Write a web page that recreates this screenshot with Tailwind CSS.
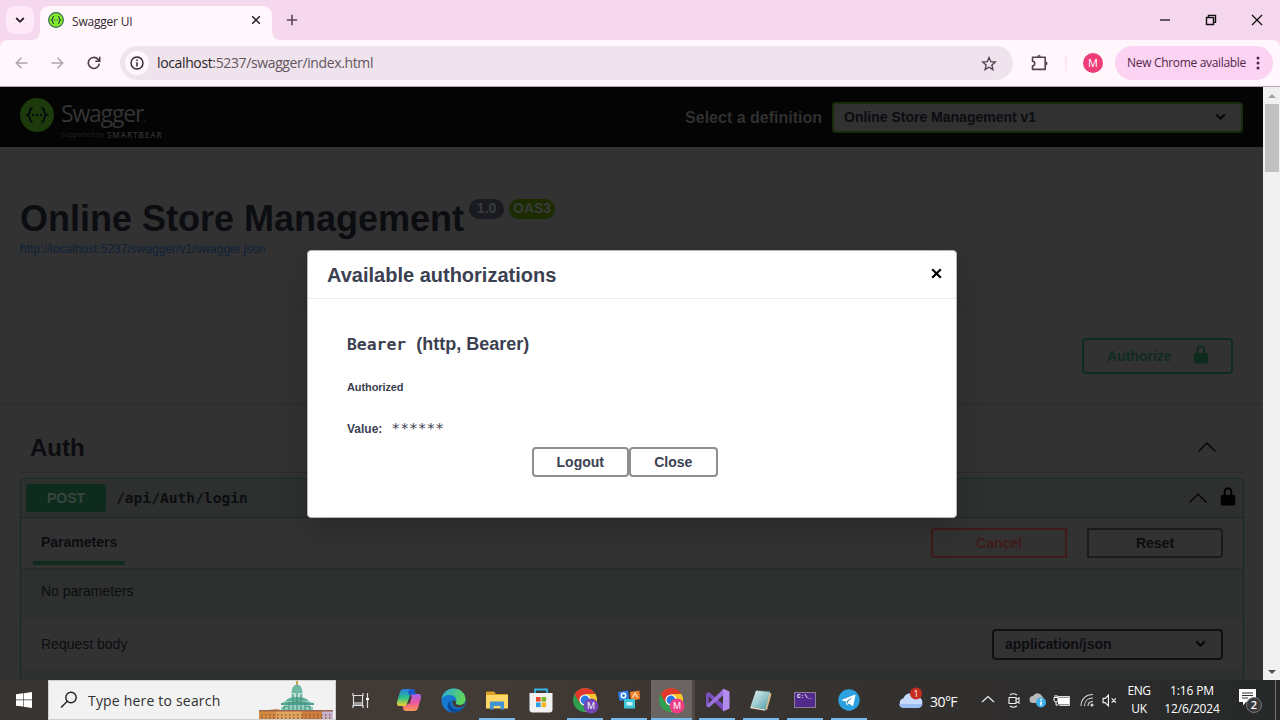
<!DOCTYPE html>
<html lang="en">
<head>
<meta charset="utf-8">
<title>Swagger UI</title>
<script src="https://cdn.jsdelivr.net/npm/@tailwindcss/browser@4"></script>
</head>
<body class="w-[1280px] h-[720px] overflow-hidden flex flex-col font-['Liberation_Sans',sans-serif] bg-[#323232]">

<!-- Tab strip -->
<div class="h-10 shrink-0 bg-[#f6d8ee] flex items-end font-['Open_Sans',sans-serif]">
  <div class="w-10 h-10 relative shrink-0">
    <div class="absolute left-[6px] top-[6px] w-7 h-7 rounded-[9px] bg-[#fdeaf6] flex items-center justify-center">
      <svg width="10" height="8" viewBox="0 0 10 8" fill="none" stroke="#2a1d28" stroke-width="1.8"><path d="M1.2 2l3.8 3.8L8.8 2"/></svg>
    </div>
    <svg class="absolute right-0 bottom-0" width="8" height="8" viewBox="0 0 8 8"><path d="M8 0v8H0a8 8 0 0 0 8-8z" fill="#fff7fb"/></svg>
  </div>
  <div class="w-[232px] h-[34px] rounded-t-[9px] bg-[#fff7fb] flex items-center pl-2 pr-[11px] pb-[6px] shrink-0">
    <svg width="16" height="16" viewBox="0 0 16 16"><circle cx="8" cy="8" r="7.4" fill="#85ea2d" stroke="#2c6b4c" stroke-width="1.1"/><path d="M6 4.5c-2 0-.7 3-2.3 3.5C5.300 8.500 4 11.500 6 11.500M10 4.500c2 0 .7 3 2.300 3.500-1.600.5-.3 3.500-2.300 3.500" fill="none" stroke="#173647" stroke-width="1.100"/><path d="M6 8h4" stroke="#2f6a3c" stroke-width="1" stroke-dasharray="1 .6"/></svg>
    <span class="ml-2 text-[12px] leading-4 text-[#33282f] tracking-[-0.2px] flex-1 pt-[3px]">Swagger UI</span>
    <svg width="10" height="10" viewBox="0 0 10 10" stroke="#241a22" stroke-width="1.5"><path d="M1.200 1.200l7.600 7.600M8.800 1.200l-7.600 7.600"/></svg>
  </div>
  <svg class="shrink-0" width="8" height="8" viewBox="0 0 8 8"><path d="M0 0v8h8a8 8 0 0 1-8-8z" fill="#fff7fb"/></svg>
  <svg class="ml-[6px] mb-[14px] shrink-0" width="12" height="12" viewBox="0 0 12 12" stroke="#5c4457" stroke-width="1.600"><path d="M6 .8v10.400M.8 6h10.400"/></svg>
  <div class="flex-1"></div>
  <div class="flex items-center h-10 pr-[17px] gap-[34px]">
    <svg width="12" height="12" viewBox="0 0 12 12" stroke="#111" stroke-width="1.300"><path d="M1 6h10"/></svg>
    <svg width="12" height="12" viewBox="0 0 12 12" fill="none" stroke="#111" stroke-width="1.400"><path d="M1.500 3.500h7v7h-7zM3.500 3.300V1.400h7v7H8.700"/></svg>
    <svg width="12" height="12" viewBox="0 0 12 12" stroke="#111" stroke-width="1.300"><path d="M1 1l10 10M11 1L1 11"/></svg>
  </div>
</div>

<!-- Toolbar -->
<div class="bg-[#f6d8ee] shrink-0">
<div class="h-[47px] bg-[#fff7fb] rounded-t-[7px] border-b border-[#b8a2b0] flex items-center font-['Open_Sans',sans-serif]">
  <div class="flex items-center gap-[23px] pl-[15px] w-[120px]">
    <svg width="13" height="12" viewBox="0 0 13 12" fill="none" stroke="#aea3aa" stroke-width="1.500"><path d="M12.500 6H1.500M6.500 .8L1.300 6l5.200 5.200"/></svg>
    <svg width="13" height="12" viewBox="0 0 13 12" fill="none" stroke="#aea3aa" stroke-width="1.500"><path d="M.5 6h11M6.500 .8L11.700 6l-5.200 5.200"/></svg>
    <svg width="14" height="14" viewBox="0 0 14 14" fill="none" stroke="#4c3848" stroke-width="1.600"><path d="M12.300 7.600A5.500 5.500 0 1 1 10.900 3.200L12.500 5M12.700 .8v4.400H8.300"/></svg>
  </div>
  <div class="w-[893px] h-[34px] rounded-full bg-[#efe4ed] flex items-center pl-[5px] pr-4">
    <div class="w-6 h-6 rounded-full bg-[#fff7fb] flex items-center justify-center">
      <svg width="14" height="14" viewBox="0 0 14 14"><circle cx="7" cy="7" r="6" fill="none" stroke="#2e2229" stroke-width="1.400"/><path d="M7 6.200v4.200M7 3.500v1.500" stroke="#2e2229" stroke-width="1.500"/></svg>
    </div>
    <span class="ml-2 text-[14px] leading-5 text-[#63545e] flex-1 tracking-[-0.37px]"><span class="text-[#2b1f28]">localhost</span>:5237/swagger/index.html</span>
    <svg width="16" height="15" viewBox="0 0 16 15" fill="none" stroke="#54424f" stroke-width="1.400"><path d="M8 1.600l1.800 4.100 4.500.4-3.400 3 1 4.400L8 11.200l-3.900 2.300 1-4.400-3.400-3 4.500-.4z"/></svg>
  </div>
  <svg class="ml-[18px] -mt-[2px]" width="17" height="17" viewBox="0 0 17 17" fill="none" stroke="#54424f" stroke-width="1.600"><path d="M1.500 3.200h12.700v12.200H1.500v-3.600c3 0 3-4.600 0-4.600z" stroke-linejoin="round"/><path d="M6.200 2.700a1.800 1.800 0 0 1 3.600 0zM14.700 7.600a1.800 1.800 0 0 1 0 3.600z" fill="#54424f" stroke="none"/></svg>
  <div class="ml-[17px] w-[2px] h-4 bg-[#fde3f4]"></div>
  <div class="ml-4 w-5 h-5 rounded-full bg-[#ee3d79] text-white text-[11px] flex items-center justify-center">M</div>
  <div class="ml-3 w-[158px] h-[34px] rounded-full bg-[#fdd3f3] flex items-center pl-3 pr-[13px] justify-between text-[12px] text-[#51264b] whitespace-nowrap">
    <span class="tracking-[-0.32px]">New Chrome available</span>
    <svg width="4" height="14" viewBox="0 0 4 14" fill="#51264b"><circle cx="2" cy="2" r="1.500"/><circle cx="2" cy="7" r="1.500"/><circle cx="2" cy="12" r="1.500"/></svg>
  </div>
</div>
</div>

<!-- Page and scrollbar -->
<div class="h-[593px] shrink-0 flex relative overflow-hidden">
  <div class="w-[1263px] h-[593px] overflow-hidden flex flex-col bg-[#323232] text-[#0c0d11]">
    <!-- Topbar -->
    <div class="h-[60px] shrink-0 bg-[#040404] flex items-center pl-5 pr-5">
      <svg width="34" height="34" class="-mt-[5px]" viewBox="0 0 34 34"><circle cx="17" cy="17" r="17" fill="#1c3a0b"/><path d="M12.500 10c-4 0-1.500 6-4.800 7 3.300 1 .8 7 4.800 7M21.500 10c4 0 1.500 6 4.800 7-3.300 1-.8 7-4.800 7" fill="none" stroke="#050c0e" stroke-width="1.900"/><circle cx="13" cy="17" r="1.200" fill="#050c0e"/><circle cx="17" cy="17" r="1.200" fill="#050c0e"/><circle cx="21" cy="17" r="1.200" fill="#050c0e"/></svg>
      <div class="ml-[7px] w-[110px] font-['Open_Sans',sans-serif] text-[#343434] pt-[3px]">
        <div class="text-[23px] leading-[27px] tracking-[-1.2px] pt-px">Swagger<span class="text-[10px]">.</span></div>
        <div class="text-[7px] leading-[9px] -mt-[2px] whitespace-nowrap flex items-center"><span class="text-[#222] tracking-[-0.1px]">Supported by</span><span class="text-[8px] ml-[3px] tracking-[1px] font-semibold text-[#303030]">SMARTBEAR</span></div>
      </div>
      <div class="flex-1"></div>
      <span class="text-[16px] font-bold text-[#303030] mr-[10px] pt-px">Select a definition</span>
      <div class="w-[411px] h-[31px] rounded-[4px] border-2 border-[#172a0b] bg-[#313131] flex items-center justify-between pl-[10px] pr-[15px] text-[14px] font-bold">
        <span>Online Store Management v1</span>
        <svg width="11" height="8" viewBox="0 0 11 8" fill="none" stroke="#050505" stroke-width="1.800"><path d="M1.300 1.500l4.200 4.200 4.200-4.200"/></svg>
      </div>
    </div>
    <!-- Title -->
    <div class="h-[160px] shrink-0 pl-5 pt-[50px]">
      <div class="flex items-start h-[44px]">
        <h1 class="text-[36px] leading-[42px] font-bold pt-px">Online Store Management</h1>
        <div class="flex gap-[5px] ml-[5px] mt-[2px] text-[14px] leading-[19px] font-bold text-[#3a3b3d]">
          <span class="w-[35px] h-5 rounded-full bg-[#191b20] text-center">1.0</span>
          <span class="w-[46px] h-5 rounded-full bg-[#1c2b00] text-center">OAS3</span>
        </div>
      </div>
      <a class="block text-[12px] leading-[16px] text-[#0e2137]">http://localhost:5237/swagger/v1/swagger.json</a>
    </div>
    <!-- Authorize bar -->
    <div class="h-[97px] shrink-0 border-y border-t-[#303030] border-b-[#2b2b2b] flex items-center justify-end pr-[30px]">
      <div class="w-[151px] h-[36px] rounded-[4px] border-2 border-[#0f2b1e] text-[#0f2b1e] flex items-center pl-[23px] pr-[22px] justify-between text-[14px] font-bold">
        <span class="pt-px">Authorize</span>
        <svg width="16" height="19" class="-mt-[2px]" viewBox="0 0 16 19"><path d="M2 8h12a1.200 1.200 0 0 1 1.200 1.200v8A1.200 1.200 0 0 1 14 18.400H2a1.200 1.200 0 0 1-1.200-1.200v-8A1.200 1.200 0 0 1 2 8z" fill="#0f2b1e"/><path d="M4.700 8.500V4.500a3.300 3.300 0 0 1 6.600 0v4" fill="none" stroke="#0f2b1e" stroke-width="2"/></svg>
      </div>
    </div>
    <!-- Auth section -->
    <div class="mt-[18px] mx-5 h-[51px] shrink-0 border-b border-[#2c2c2e] flex items-center justify-between pl-[10px] pr-[26px]">
      <h2 class="text-[24px] font-bold pt-px">Auth</h2>
      <svg width="20" height="12" viewBox="0 0 20 12" fill="none" stroke="#060606" stroke-width="1.500"><path d="M1.500 10.500L10 2l8.500 8.500"/></svg>
    </div>
    <div class="mt-[5px] ml-5 mr-[19px] border border-[#182b23] rounded-[4px] shrink-0 h-[230px] bg-[#2d302f]">
      <div class="h-[39px] border-b border-[#182b23] flex items-center pl-[5px] pr-[7px]">
        <span class="w-[80px] h-[28px] rounded-[3px] bg-[#0f2b1e] text-[#374540] text-[14px] font-bold flex items-center justify-center">POST</span>
        <span class="ml-[10px] text-[14.600px] font-bold font-['DejaVu_Sans_Mono',monospace] flex-1">/api/Auth/login</span>
        <svg width="20" height="12" viewBox="0 0 20 12" fill="none" stroke="#060606" stroke-width="1.500"><path d="M1.500 10.500L10 2l8.500 8.500"/></svg>
        <svg class="ml-3 -mt-[3px]" width="16" height="19" viewBox="0 0 16 19"><path d="M2 8h12a1.200 1.200 0 0 1 1.200 1.200v8A1.200 1.200 0 0 1 14 18.400H2a1.200 1.200 0 0 1-1.200-1.200v-8A1.200 1.200 0 0 1 2 8z" fill="#000"/><path d="M4.700 8.500V4.500a3.300 3.300 0 0 1 6.600 0v4" fill="none" stroke="#000" stroke-width="2"/></svg>
      </div>
      <div class="h-[51px] bg-[#323232] border-b border-[#292b2a] flex items-center pl-3 pr-5 text-[14px] font-bold">
        <div class="w-[92px] h-[47px] pt-[15px] pl-2 border-b-4 border-[#0f2b1e] self-start leading-[18px]">Parameters</div>
        <div class="flex-1"></div>
        <div class="w-[136px] h-[30px] rounded-l-[4px] border-2 border-[#401a1a] text-[#401a1a] flex items-center justify-center">Cancel</div>
        <div class="ml-5 w-[136px] h-[30px] rounded-r-[4px] border-2 border-[#1b1b1c] flex items-center justify-center">Reset</div>
      </div>
      <div class="h-[49px] flex items-start pl-5 pt-[12px] text-[14px] leading-5">No parameters</div>
      <div class="h-[52px] bg-[#323232] flex items-center justify-between pl-5 pr-5 text-[14px]">
        <span class="pt-px">Request body</span>
        <div class="w-[231px] h-[31px] rounded-[4px] border-2 border-[#0f1011] flex items-center justify-between pl-[11px] pr-[15px] font-bold">
          <span>application/json</span>
          <svg width="11" height="8" viewBox="0 0 11 8" fill="none" stroke="#050505" stroke-width="1.800"><path d="M1.300 1.500l4.200 4.200 4.200-4.200"/></svg>
        </div>
      </div>
    </div>
  </div>
  <!-- Scrollbar -->
  <div class="w-[17px] h-[593px] bg-[#f0f0f0] flex flex-col items-center">
    <div class="h-[17px] flex items-center"><svg width="8" height="4" viewBox="0 0 8 4"><path d="M0 4l4-4 4 4z" fill="#a3a3a3"/></svg></div>
    <div class="w-[14px] h-[68px] bg-[#c1c1c1]"></div>
    <div class="flex-1"></div>
    <div class="h-[17px] flex items-center"><svg width="8" height="4" viewBox="0 0 8 4"><path d="M0 0l4 4 4-4z" fill="#505050"/></svg></div>
  </div>

  <!-- Authorization dialog -->
  <div class="absolute left-[307px] top-[163px] w-[650px] h-[268px] bg-white rounded-[4px] border border-[#b5b5b5] shadow-[0_10px_30px_rgba(0,0,0,0.2)] text-[#3b4151] flex flex-col">
    <div class="h-[48px] border-b border-[#ededed] flex items-center justify-between pl-[19px] pr-[14px]">
      <h3 class="text-[20px] font-bold">Available authorizations</h3>
      <svg class="-mt-[3px]" width="11" height="11" viewBox="0 0 11 11" stroke="#000" stroke-width="2.200"><path d="M1.200 1.200l8.600 8.600M9.800 1.200L1.200 9.800"/></svg>
    </div>
    <div class="pl-[39px] pt-[33px]">
      <h4 class="flex items-baseline h-6 leading-6 font-bold text-[18px] whitespace-pre"><span class="font-['DejaVu_Sans_Mono',monospace] text-[16.400px]">Bearer</span><span class="ml-[10px]">(http, Bearer)</span></h4>
      <h6 class="mt-[23px] text-[11px] leading-4 font-bold tracking-[-0.1px]">Authorized</h6>
      <div class="mt-[25px] flex items-center h-4"><span class="text-[12px] font-bold pt-[2px]">Value:</span><span class="ml-[9px] -mt-px text-[14.600px] font-['DejaVu_Sans_Mono',monospace]">******</span></div>
    </div>
    <div class="mt-[11px] pl-[223.500px] flex text-[14px] font-bold">
      <div class="w-[97.500px] h-[30px] rounded-[4px] border-2 border-[#8e8e8e] flex items-center justify-center">Logout</div>
      <div class="w-[88.500px] h-[30px] rounded-[4px] border-2 border-[#8e8e8e] flex items-center justify-center">Close</div>
    </div>
  </div>
</div>

<!-- Taskbar -->
<div class="h-10 shrink-0 flex items-stretch bg-linear-to-r from-[#373432] via-[#433b36] via-35% to-[#262829] font-['Open_Sans',sans-serif] text-white">
  <div class="w-12 flex items-center justify-center"><svg width="16" height="16" viewBox="0 0 16 16" fill="#fff"><path d="M0 2.200L7 1.300v6.300H0zM7.600 1.200L16 0v7.600H7.600zM0 8.300h7v6.300l-7-.9zM7.600 8.300H16V16l-8.400-1.200z"/></svg></div>
  <div class="w-[288px] bg-[#f2f2f2] border border-[#cfcfcf] flex items-center pl-[11px] text-[#2f2f2f]">
    <svg width="18" height="18" viewBox="0 0 18 18" fill="none" stroke="#222" stroke-width="1.400"><circle cx="11" cy="6.500" r="5.200"/><path d="M7.300 10.200L1 16.500"/></svg>
    <span class="ml-[10px] text-[14px] leading-5 tracking-[0.19px] pt-[2px] flex-1">Type here to search</span>
    <svg class="self-end" width="76" height="39" viewBox="0 0 76 39">
      <path d="M37 1h2v5h-2z" fill="#c9a047"/><path d="M32.500 13q0-8 5.500-8.500 5.500.5 5.500 8.500z" fill="#6fb9a4"/><path d="M32 13h12v6H32z" fill="#bfe3d6"/>
      <path d="M26 22q2-5 12-5t12 5z" fill="#5fae9a"/><path d="M25 21h26v7H25z" fill="#9ed4c4"/>
      <path d="M22 30q1-4 5-4t4 4zM45 30q0-4 4-4t5 4z" fill="#4f9f8c"/><path d="M22 27h32v7H22z" fill="#8fcdbb"/><path d="M22 23l16-2 17 2v2H22z" fill="#4f9f8c"/>
      <path d="M25 26v6M30 22v9M34 14v17M38 13v18M42 14v17M46 22v9M51 26v6" stroke="#4a9583" stroke-width="1.200"/>
      <path d="M0 31l18-2 7 2v8H0z" fill="#d58a3f"/><path d="M17 31h27v8H17z" fill="#e2a55c"/><path d="M43 30h21v9H43z" fill="#cf7d3a"/><path d="M63 31h11v8H63z" fill="#c9b3cf"/>
      <path d="M0 30h74v1.500H0z" fill="#9a6650"/><path d="M2 35h70M2 38h70" stroke="#8c5f3f" stroke-width="1.600" stroke-dasharray="1.500 2.500"/>
    </svg>
  </div>
  <div class="w-[51px] flex items-center justify-center pr-[3px]"><svg width="17" height="17" viewBox="0 0 17 17" fill="none" stroke="#ddd" stroke-width="1.200"><path d="M1 1v2.500h10V1M1 16v-2.500h10V16M1.500 3.500v10M10.500 3.500v10M15.500 1v15"/><path d="M2 10h8v3H2z" fill="#999" stroke="none"/><path d="M14 6h3v2h-3z" fill="#fff" stroke="none"/></svg></div>
  <!-- Copilot -->
  <div class="w-11 flex items-center justify-center"><svg width="26" height="24" viewBox="0 0 26 24"><defs><linearGradient id="c1" x1="0" y1="0" x2="0" y2="1"><stop offset="0" stop-color="#2b7de9"/><stop offset=".5" stop-color="#27c08a"/><stop offset="1" stop-color="#f3d02f"/></linearGradient><linearGradient id="c2" x1="0" y1="0" x2="0" y2="1"><stop offset="0" stop-color="#a563f2"/><stop offset=".5" stop-color="#f0569d"/><stop offset="1" stop-color="#fb9a52"/></linearGradient></defs><path d="M8 1h8c2 0 2.500 1 3 3l.8 2.500h-3c-2 0-3 1-3.500 3L11 16c-.5 2-1.500 2-3 2H4c-3 0-3.500-2-2.800-4.500L4 4c.7-2 1.800-3 4-3z" fill="url(#c1)"/><path d="M18 23h-8c-2 0-2.500-1-3-3l-.4-2h2c2 0 3-1 3.500-3L15 8c.5-1.500 1.500-2 3-2h4c3 0 3.500 2 2.800 4.500L22 20c-.7 2-1.800 3-4 3z" fill="url(#c2)"/><path d="M14 1h2c2 0 2.500 1 3 3l.7 2.500h-3c-1.500 0-2.300.4-2.900 1.500L12 4z" fill="#1b55c8"/><path d="M11.500 15L14 8.500h2L13.500 16z" fill="#433b36"/></svg></div>
  <!-- Edge -->
  <div class="w-11 flex items-center justify-center"><svg width="25" height="25" viewBox="0 0 25 25"><defs><linearGradient id="e1" x1="0" y1="0" x2="1" y2=".3"><stop offset="0" stop-color="#2aa7e0"/><stop offset="1" stop-color="#5fd65a"/></linearGradient></defs><circle cx="12.500" cy="12.500" r="12" fill="#1479cf"/><path d="M.6 11C1.500 5 6.500.5 12.500.5c7 0 12 5 12 10.500 0 4-3 6-6 6-2.500 0-4-1-3.500-2.300C16.800 10.500 13 7 8.500 7 4.500 7 1.800 9 .6 11z" fill="url(#e1)"/><path d="M9.500 12.500c-1 6 4 9.500 8.500 8.700 2-.3 3.500-1.200 4.600-2.200-2 4-6 5.900-10 5.500C7 23.500 4 17 9.500 12.500z" fill="#0d4a99"/><path d="M15 14.700c-.5 1.300 1 2.300 3.500 2.300 2 0 4-.8 5.200-2.600l-1 3.600c-2 1.500-4.700 2.300-7.700 1.300-3.500-1.300-4.500-4.300-3-7.300 1.800.1 3.300 1.300 3 2.700z" fill="#433c38"/></svg></div>
  <!-- Explorer -->
  <div class="w-11 relative flex items-center justify-center"><svg width="22" height="19" viewBox="0 0 22 19"><path d="M0 1.500Q0 .5 1 .5h7l2 2.500h11q1 0 1 1V17H0z" fill="#d9a021"/><path d="M0 4h22v13.500H0z" fill="#ffd766"/><path d="M4 10.500h14v8h-3.500V15h-7v3.500H4z" fill="#3f93d6"/></svg><i class="absolute bottom-0 left-1 right-1 h-[2px] bg-[#76b9ed]"></i></div>
  <!-- Store -->
  <div class="w-11 flex items-center justify-center pr-px"><svg width="24" height="25" viewBox="0 0 24 25"><path d="M6 6V1.500h12V6" fill="none" stroke="#35b4e6" stroke-width="1.800"/><path d="M.5 5h23v16.500q0 3-3 3h-17q-3 0-3-3z" fill="#f1f1f1"/><path d="M7 9h4.600v4.600H7z" fill="#e74a2c"/><path d="M12.500 9h4.600v4.600h-4.600z" fill="#7cb62f"/><path d="M7 14.500h4.600v4.600H7z" fill="#2a9fe3"/><path d="M12.500 14.500h4.600v4.600h-4.600z" fill="#f6b51e"/></svg></div>
  <!-- Chrome, first profile -->
  <div class="w-11 relative flex items-center justify-center pl-[2px]"><svg width="28" height="28" viewBox="0 0 28 28"><circle cx="13" cy="14" r="12" fill="#2f9e4f"/><path d="M2.600 8A12 12 0 0 1 23.400 8H13z" fill="#e2382c"/><path d="M2.600 8l5.200 9 5.200-9z" fill="#e2382c"/><path d="M23.400 8A12 12 0 0 1 13 26l5.200-9L13 8z" fill="#fbc62c"/><circle cx="13" cy="14" r="5.600" fill="#fff"/><circle cx="13" cy="14" r="4.400" fill="#2b78e4"/><circle cx="19" cy="20" r="7.500" fill="#7446b5"/><text x="19" y="23.200" font-size="9" text-anchor="middle" fill="#fff">M</text></svg><i class="absolute bottom-0 left-1 right-1 h-[2px] bg-[#76b9ed]"></i></div>
  <!-- People cards -->
  <div class="w-11 relative flex items-center justify-center"><svg width="22" height="22" viewBox="0 0 22 22"><path d="M0 3l10-1.500 1 9L1.500 12z" fill="#2e7fe8"/><circle cx="5.500" cy="6.500" r="2.200" fill="none" stroke="#fff" stroke-width="1.400"/><path d="M12 3l9.500-1.500L22 10l-9 2z" fill="#f0802b"/><path d="M14.500 8.500L17 4l2.500 4.500" stroke="#ffe1bd" stroke-width="1.300" fill="none"/><path d="M6 10h11v9.500H6z" fill="#3cc6d8"/><path d="M8.500 13h6v3.500h-6z" fill="#c9f3f7"/></svg><i class="absolute bottom-0 left-1 right-1 h-[2px] bg-[#76b9ed]"></i></div>
  <!-- Chrome, active profile -->
  <div class="w-11 relative flex items-center justify-center bg-[#6a6462] border-r-[3px] border-[#4f4946]"><svg width="28" height="28" viewBox="0 0 28 28"><circle cx="13" cy="14" r="12" fill="#2f9e4f"/><path d="M2.600 8A12 12 0 0 1 23.400 8H13z" fill="#e2382c"/><path d="M2.600 8l5.200 9 5.200-9z" fill="#e2382c"/><path d="M23.400 8A12 12 0 0 1 13 26l5.200-9L13 8z" fill="#fbc62c"/><circle cx="13" cy="14" r="5.600" fill="#fff"/><circle cx="13" cy="14" r="4.400" fill="#2b78e4"/><circle cx="19" cy="20" r="7.500" fill="#ea3f86"/><text x="19" y="23.200" font-size="9" text-anchor="middle" fill="#fff">M</text></svg><i class="absolute bottom-0 left-0 right-0 h-[2px] bg-[#76b9ed]"></i></div>
  <!-- Visual Studio -->
  <div class="w-11 relative flex items-center justify-center"><svg width="25" height="24" viewBox="0 0 25 24"><path d="M1 5.500L4 4l14.500 12.500V23L3.800 8.600V16L1 18z" fill="#7c4fc0"/><path d="M1 18l3 1.500L18.500 7V.8L3.500 15.500z" fill="#9a70dd"/><path d="M18 .5l6.500 3v17l-6.500 3z" fill="#b18bf0"/></svg><i class="absolute bottom-0 left-1 right-1 h-[2px] bg-[#76b9ed]"></i></div>
  <!-- Notepad -->
  <div class="w-11 relative flex items-center justify-center"><svg width="22" height="22" viewBox="0 0 22 22"><defs><linearGradient id="n1" x1="0" y1="0" x2="1" y2="1"><stop offset="0" stop-color="#e6f5f5"/><stop offset=".5" stop-color="#9ccbd0"/><stop offset="1" stop-color="#4a98a3"/></linearGradient></defs><path d="M19 3l2.500 2L17 21l-3-1z" fill="#d8b98a"/><path d="M6 1.500l14 1L15.500 20.500 0.500 17.500z" fill="url(#n1)"/><path d="M.5 17.500l15 3-.3 1.200-15-2.500z" fill="#e8e2d6"/><path d="M6 1.300l14 1" stroke="#555" stroke-width="1.400" stroke-dasharray="1 1"/></svg><i class="absolute bottom-0 left-1 right-1 h-[2px] bg-[#76b9ed]"></i></div>
  <!-- Terminal -->
  <div class="w-11 relative flex items-center justify-center"><div class="w-[22px] h-4 bg-[#512a8c] border border-[#8a7f94] text-[6px] leading-[7px] pl-[2px] font-['Liberation_Mono',monospace] font-bold">C:\_</div><i class="absolute bottom-0 left-1 right-1 h-[2px] bg-[#76b9ed]"></i></div>
  <!-- Telegram -->
  <div class="w-11 relative flex items-center justify-center"><svg width="22" height="22" viewBox="0 0 22 22"><circle cx="11" cy="11" r="10.700" fill="#2ba2df"/><path d="M4 10.800l12.500-5c.7-.2 1 .2.900.9l-2.100 9.500c-.2.8-.8.9-1.300.5l-3-2.300-1.600 1.500c-.4.3-.7.200-.8-.3l-.7-3.200-3.700-1c-.7-.2-.7-.5-.2-.6z" fill="#fff"/><path d="M8.600 12.300l6-4.300-4.600 4.800-.4 2.800z" fill="#2b89bd"/></svg><i class="absolute bottom-0 left-1 right-1 h-[2px] bg-[#76b9ed]"></i></div>
  <!-- Tray -->
  <div class="flex-1 relative flex items-center pl-[27px]">
    <svg class="shrink-0 -mt-[2px]" width="26" height="24" viewBox="0 0 26 24"><path d="M6 21a5 5 0 0 1-.5-9.800A7 7 0 0 1 18 9.500a5.800 5.800 0 0 1 1.500 11.500z" fill="#c5d9fb"/><path d="M1 17a5 5 0 0 0 5 4h13.500a5 5 0 0 0 5-4z" fill="#9dbcf1"/><circle cx="18" cy="6.500" r="6" fill="#c52b1e"/><text x="18" y="10" font-size="9" text-anchor="middle" fill="#fff">1</text></svg>
    <span class="ml-[6px] w-[51px] text-[14px] tracking-[-0.55px] pt-[2px]">30°F</span>
    <svg class="shrink-0 -mt-[2px]" width="14" height="8" viewBox="0 0 14 8" fill="none" stroke="#eee" stroke-width="1.200"><path d="M1 7l6-5.500L13 7"/></svg>
    <svg class="shrink-0 ml-[13px]" width="13" height="16" viewBox="0 0 13 16" fill="none" stroke="#eee" stroke-width="1.100"><path d="M1 5.500h7v6H1zM8 7.500l3-1.500v5L8 9.500M2 3q3-2.500 7 0M2 14q3 2.500 7 0"/></svg>
    <svg class="shrink-0 ml-[8px]" width="18" height="16" viewBox="0 0 18 16"><path d="M4 11a3.500 3.500 0 0 1 0-7A5 5 0 0 1 13 4l3 4-4 3z" fill="#b9b9b9"/><circle cx="12" cy="10.500" r="5" fill="#3fb1ea"/><path d="M12 9.500v4M12 7v1.500" stroke="#fff" stroke-width="1.600"/></svg>
    <svg class="shrink-0 ml-[6px]" width="18" height="14" viewBox="0 0 18 14"><path d="M5 4.500h11.500v7H5z" fill="#fff"/><path d="M4.500 3.500h12v9h-10" fill="none" stroke="#ddd"/><path d="M1 4.500h4v2.500a2 2 0 0 1-4 0zM2 2v2.500M4 2v2.500M3 9v3h2" fill="none" stroke="#fff"/></svg>
    <svg class="shrink-0 ml-[9px]" width="14" height="14" viewBox="0 0 14 14" fill="none" stroke="#d5d5d5" stroke-width="1.100"><path d="M1 13C1 6 6 1.500 13 1.500M4.500 13c0-5 3.500-8 8.500-8M8 13c0-3 2-4.500 5-4.500"/><circle cx="12" cy="12" r="1" fill="#fff"/></svg>
    <svg class="shrink-0 ml-[8px]" width="15" height="13" viewBox="0 0 14 12" fill="none" stroke="#eee" stroke-width="1.100"><path d="M1 4h2l3-3v10L3 8H1zM9 4l4 4M13 4L9 8"/></svg>
    <div class="ml-[8px] w-[28px] text-[12px] leading-[18px] text-center tracking-[-0.4px]"><div>ENG</div><div>UK</div></div>
    <div class="ml-[5px] w-[68px] text-[12px] leading-[18px] text-center tracking-[-0.15px] whitespace-nowrap"><div>1:16 PM</div><div>12/6/2024</div></div>
    <svg class="shrink-0 ml-[12px]" width="26" height="26" viewBox="0 0 26 26"><path d="M1 2h17v13H8l-3 3.500V15H1z" fill="#fff"/><path d="M4 6h11M4 8.500h11M4 11h6" stroke="#333" stroke-width="1"/><circle cx="16" cy="18" r="7.500" fill="#3a3a3a" stroke="#777"/><text x="16" y="22" font-size="11" font-weight="600" text-anchor="middle" fill="#fff">2</text></svg>
    <i class="absolute right-1 top-0 bottom-0 w-px bg-[#77716d]"></i>
  </div>
</div>
</body>
</html>
